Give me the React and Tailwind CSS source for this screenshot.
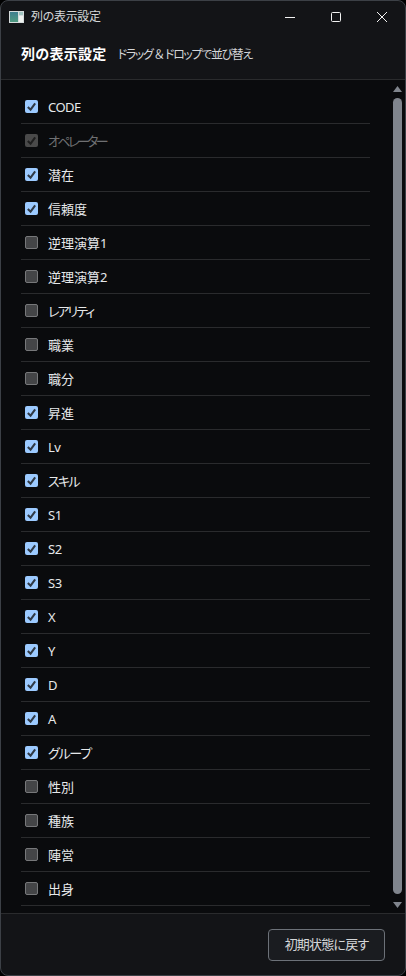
const columns = [
  { name: 'CODE', checked: true, tracking: 'tracking-[-0.5px]' },
  { name: 'オペレーター', checked: true, disabled: true, tracking: 'tracking-[-2.6px]' },
  { name: '潜在', checked: true },
  { name: '信頼度', checked: true },
  { name: '逆理演算1', checked: false },
  { name: '逆理演算2', checked: false },
  { name: 'レアリティ', checked: false, tracking: 'tracking-[-2px]' },
  { name: '職業', checked: false },
  { name: '職分', checked: false },
  { name: '昇進', checked: true },
  { name: 'Lv', checked: true, tracking: 'tracking-[-0.5px]' },
  { name: 'スキル', checked: true, tracking: 'tracking-[-1.7px]' },
  { name: 'S1', checked: true, tracking: 'tracking-[-0.5px]' },
  { name: 'S2', checked: true, tracking: 'tracking-[-0.5px]' },
  { name: 'S3', checked: true, tracking: 'tracking-[-0.5px]' },
  { name: 'X', checked: true },
  { name: 'Y', checked: true },
  { name: 'D', checked: true },
  { name: 'A', checked: true },
  { name: 'グループ', checked: true, tracking: 'tracking-[-1.25px]' },
  { name: '性別', checked: false },
  { name: '種族', checked: false },
  { name: '陣営', checked: false },
  { name: '出身', checked: false },
]

const Checkbox = ({ checked, disabled }) => {
  if (disabled) {
    return (
      <span className="w-[13px] h-[13px] rounded-[2px] bg-[#4a4a4a] flex items-center justify-center">
        <svg className="w-[11px] h-[11px]" viewBox="0 0 12 12" fill="none" stroke="#1f1f1f" strokeWidth="2.2">
          <path d="M2 6.5 5 9.5 10 2.5" />
        </svg>
      </span>
    )
  }
  if (checked) {
    return (
      <span className="w-[13px] h-[13px] rounded-[2px] bg-[#9ccaff] flex items-center justify-center">
        <svg className="w-[11px] h-[11px]" viewBox="0 0 12 12" fill="none" stroke="#2f3945" strokeWidth="2.2">
          <path d="M2 6.5 5 9.5 10 2.5" />
        </svg>
      </span>
    )
  }
  return <span className="w-[13px] h-[13px] rounded-[2px] bg-[#444547] border border-[#77787a]" />
}

const ColumnRow = ({ column }) => (
  <div className="h-[34px] flex items-center border-b border-[#2a2b2d] pl-1">
    <Checkbox checked={column.checked} disabled={column.disabled} />
    <span className={`ml-[10px] pt-[2px] text-[13px] ${column.tracking || ''} ${column.disabled ? 'text-[#6f7072]' : 'text-[#e6e8ea]'}`}>
      {column.name}
    </span>
  </div>
)

export default function App() {
  return (
    <div className="w-[406px] h-[976px] bg-black font-['Noto_Sans','Noto_Sans_CJK_JP',sans-serif] [font-feature-settings:'palt']">
      <div className="w-full h-full flex flex-col rounded-[8px] overflow-hidden border border-[#3c4046] bg-[#131417]">
        {/* title bar */}
        <div className="h-[31px] shrink-0 flex items-center">
          <svg className="ml-2 w-[15px] h-[12px]" viewBox="0 0 15 12">
            <defs>
              <linearGradient id="pane" x1="0" y1="0" x2="0" y2="1">
                <stop offset="0" stopColor="#3f7f8f" />
                <stop offset="1" stopColor="#4f9a80" />
              </linearGradient>
            </defs>
            <rect width="15" height="12" fill="#d5dbdc" />
            <rect x="1" y="1" width="8" height="10" fill="url(#pane)" />
            <rect x="10" y="1" width="4" height="3" fill="#9fc4c0" />
            <rect x="10" y="5" width="4" height="6" fill="#eef2f0" />
          </svg>
          <span className="ml-[7px] text-[12px] tracking-[-0.3px] text-[#d4d6d8]">列の表示設定</span>
          <div className="ml-auto flex items-center">
            <div className="w-[46px] h-[31px] flex items-center justify-center">
              <svg className="w-[10px] h-[10px]" viewBox="0 0 10 10" stroke="#f2f2f2" fill="none">
                <path d="M0 5.5H10" />
              </svg>
            </div>
            <div className="w-[46px] h-[31px] flex items-center justify-center">
              <svg className="w-[10px] h-[10px]" viewBox="0 0 10 10" stroke="#f2f2f2" fill="none">
                <rect x="0.5" y="0.5" width="9" height="9" rx="1" />
              </svg>
            </div>
            <div className="w-[46px] h-[31px] flex items-center justify-center">
              <svg className="w-[10px] h-[10px]" viewBox="0 0 10 10" stroke="#f2f2f2" fill="none">
                <path d="M0 0 10 10M10 0 0 10" />
              </svg>
            </div>
          </div>
        </div>

        {/* header */}
        <div className="h-[48px] shrink-0 flex items-center gap-[11px] pl-5 pb-1 border-b border-[#2a2b2d]">
          <span className="text-[14px] font-bold tracking-[0.3px] text-white">列の表示設定</span>
          <span className="pt-[2px] text-[12px] tracking-[-1.35px] text-[#d4d6d8]">
            ドラッグ<span className="mx-[2px]">＆</span>ドロップで並び替え
          </span>
        </div>

        {/* list */}
        <div className="flex-1 flex bg-[#0a0b0d] min-h-0">
          <div className="w-[349px] ml-5 pt-[10px]">
            {columns.map((column) => (
              <ColumnRow key={column.name} column={column} />
            ))}
          </div>
          <div className="ml-auto mr-[3px] w-[9px] flex flex-col items-center pt-[6px]">
            <svg className="w-[9px] h-[6px]" viewBox="0 0 9 6" fill="#80858d">
              <path d="M4.5 0 9 6H0Z" />
            </svg>
            <div className="w-[9px] h-[796px] mt-[6px] rounded-full bg-[#80858d]" />
            <svg className="w-[9px] h-[6px] mt-[8px]" viewBox="0 0 9 6" fill="#80858d">
              <path d="M0 0H9L4.5 6Z" />
            </svg>
          </div>
        </div>

        {/* footer */}
        <div className="h-[62px] shrink-0 flex items-start justify-end pt-[15px] pr-5 border-t border-[#2a2b2d]">
          <button className="w-[117px] h-[32px] rounded-[4px] border border-[#6c7178] bg-[#1a1c20] text-[13px] tracking-[-0.8px] text-[#d4d6d8]">
            初期状態に戻す
          </button>
        </div>
      </div>
    </div>
  )
}
